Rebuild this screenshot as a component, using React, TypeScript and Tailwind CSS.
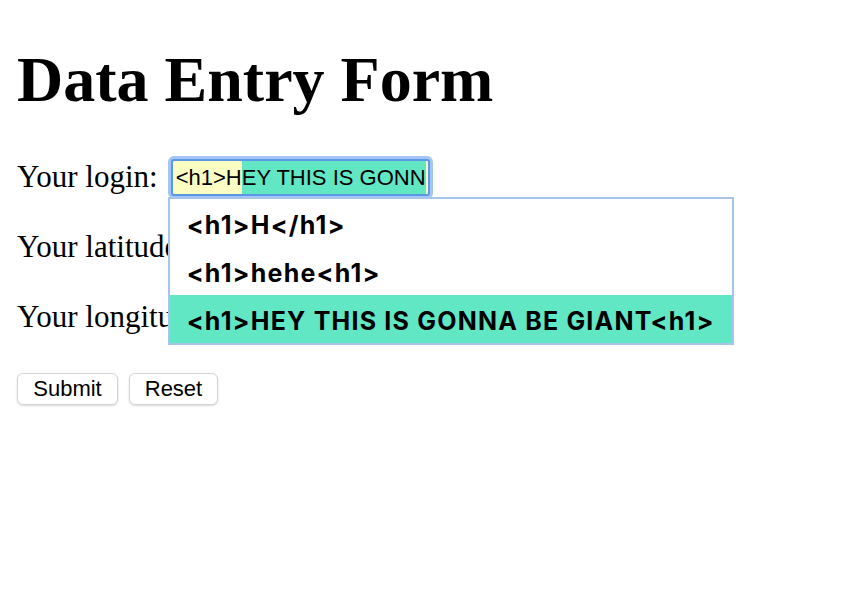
import React from 'react';

const SUGGESTIONS = [
  '<h1>H</h1>',
  '<h1>hehe<h1>',
  '<h1>HEY THIS IS GONNA BE GIANT<h1>',
];

const ui = { fontFamily: '"Liberation Sans", Arial, sans-serif' };
const menu = { fontFamily: 'Inter, "Liberation Sans", Arial, sans-serif' };

export default function App() {
  return (
    <div
      className="min-h-[590px] bg-white px-[17px] pt-[48px] text-black"
      style={{ fontFamily: '"Liberation Serif", "Times New Roman", serif' }}
    >
      <h1 className="text-[64px] font-bold leading-none">Data Entry Form</h1>

      <div className="mt-[43px] flex h-[44px] items-center text-[31px]">
        <span>Your login:</span>
        <div className="relative ml-[13px] mt-[1px]">
          <div
            className="flex h-[37px] w-[259px] items-center overflow-hidden whitespace-nowrap rounded-[3px] border-2 border-[#5a97e6] bg-[#fbfdc2] pl-[3px] text-[22px] ring-[3px] ring-[#a3c6f4]"
            style={ui}
          >
            <span>&lt;h1&gt;H</span>
            <span className="bg-[#62e7c5]">EY THIS IS GONN</span>
          </div>
          <ul
            className="absolute left-[-3px] top-[38px] z-10 w-[566px] border-2 border-[#a5c5ea] bg-white text-[25px] font-bold"
            style={menu}
          >
            {SUGGESTIONS.map((s, i) => (
              <li
                key={s}
                className={`flex h-[48px] items-center pl-[17px] pt-[5px] tracking-[1.2px] ${
                  i === 2 ? 'bg-[#62e7c5]' : ''
                }`}
              >
                {s}
              </li>
            ))}
          </ul>
        </div>
      </div>

      <div className="mt-[26px] flex h-[44px] items-center text-[31px]">
        <span>Your latitude:</span>
      </div>
      <div className="mt-[26px] flex h-[44px] items-center text-[31px]">
        <span>Your longitude:</span>
      </div>

      <div className="mt-[34px] flex gap-[11px]" style={ui}>
        <button className="h-[32px] w-[101px] rounded-[6px] border border-[#d4d4d4] bg-white text-[22px] leading-none shadow-[0_1px_2px_rgba(0,0,0,0.15)]">
          Submit
        </button>
        <button className="h-[32px] w-[89px] rounded-[6px] border border-[#d4d4d4] bg-white text-[22px] leading-none shadow-[0_1px_2px_rgba(0,0,0,0.15)]">
          Reset
        </button>
      </div>
    </div>
  );
}
